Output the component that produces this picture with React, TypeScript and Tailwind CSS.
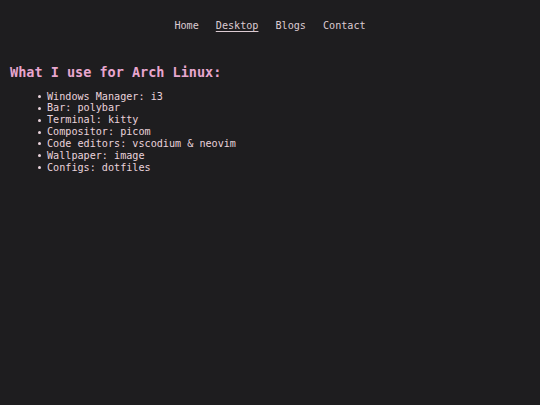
import React from "react";

export default function App() {
  const items = [
    "Windows Manager: i3",
    "Bar: polybar",
    "Terminal: kitty",
    "Compositor: picom",
    "Code editors: vscodium & neovim",
    "Wallpaper: image",
    "Configs: dotfiles",
  ];
  return (
    <div className="min-h-[405px] w-full bg-[#1e1d1f] font-['DejaVu_Sans_Mono',monospace] text-[10.15px] leading-[11.83px]">
      <nav className="flex justify-center gap-[17px] pt-[20px] text-[#dccbd2]">
        <a className="cursor-pointer">Home</a>
        <a className="cursor-pointer underline underline-offset-2">Desktop</a>
        <a className="cursor-pointer">Blogs</a>
        <a className="cursor-pointer">Contact</a>
      </nav>
      <h2 className="ml-[10px] mt-[33px] text-[13.5px] font-bold leading-[15.7px] text-[#e8a6cf]">
        What I use for Arch Linux:
      </h2>
      <ul className="mt-[10px] pl-[38px] text-[#e9d3dc]">
        {items.map((t) => (
          <li key={t}>
            <span className="mr-[6px] inline-block h-[3px] w-[3px] rounded-full bg-[#e9d3dc] align-middle" />
            {t}
          </li>
        ))}
      </ul>
    </div>
  );
}
